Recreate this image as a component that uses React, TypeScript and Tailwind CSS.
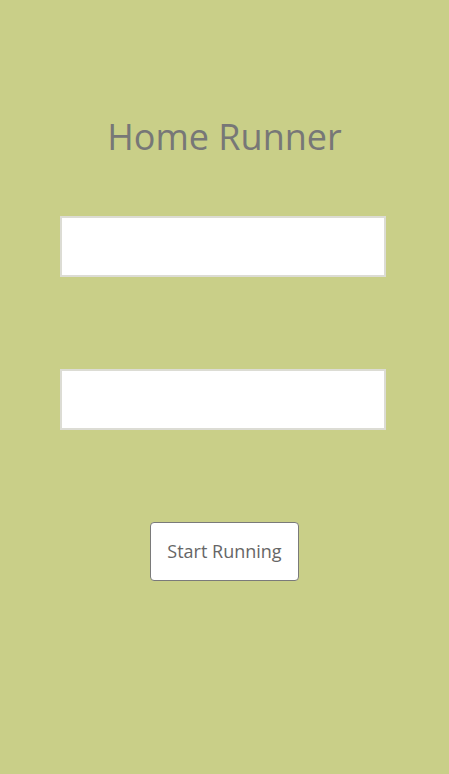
import React from 'react';

export default function App() {
  return (
    <div className="min-h-screen w-full bg-[#c9cf88] flex flex-col items-center" style={{ fontFamily: '"Open Sans", sans-serif' }}>
      <h1 className="mt-[112px] text-[36px] leading-[50px] text-[#777777] font-normal">Home Runner</h1>
      <input
        type="text"
        className="mt-[54px] mr-[3px] w-[326px] h-[61px] bg-white border-2 border-[#dcdcd4] outline-none px-3"
      />
      <input
        type="text"
        className="mt-[92px] mr-[3px] w-[326px] h-[61px] bg-white border-2 border-[#dcdcd4] outline-none px-3"
      />
      <button className="mt-[92px] w-[149px] h-[59px] bg-white border border-[#7a7a7a] rounded-[4px] text-[18px] text-[#666666]">
        Start Running
      </button>
    </div>
  );
}
